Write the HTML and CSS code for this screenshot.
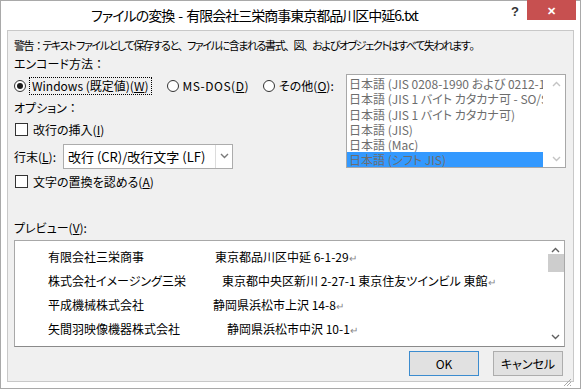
FILE: index.html
```html
<!DOCTYPE html>
<html>
	<head>
		<meta charset="UTF-8">
		<title>ファイルの変換</title>
		<link rel="stylesheet" href="styles.css">
	</head>
	<body>
		<div id="win">
			<div class="titlebar">
				<span class="title">ファイルの変換 - 有限会社三栄商事東京都品川区中延6.txt</span>
				<span class="help">?</span>
				<span class="close">&#x2715;</span>
			</div>
			<div class="client">
				<div class="warn">警告<span class="fw">：</span>テキスト ファイルとして保存すると<span class="fw">、</span>ファイルに含まれる書式<span class="fw">、</span>図<span class="fw">、</span>およびオブジェクトはすべて失われます<span class="fw">。</span></div>
				<div class="top">
					<div class="left">
						<div class="lbl">エンコード方法<span class="fw">：</span></div>
						<div class="radios">
							<label class="radio focus"><i class="dot on"></i><span class="fr">Windows (既定値)(<u>W</u>)</span></label>
							<label class="radio"><i class="dot"></i>MS-DOS(<u>D</u>)</label>
							<label class="radio"><i class="dot"></i>その他(<u>O</u>):</label>
						</div>
						<div class="lbl opt">オプション<span class="fw">：</span></div>
						<label class="check"><i class="box"></i>改行の挿入(<u>I</u>)</label>
						<div class="eol">
							<span>行末(<u>L</u>):</span>
							<div class="combo">
								<span class="val">改行 (CR)/改行文字 (LF)</span>
								<span class="drop"><svg width="9" height="6" viewBox="0 0 9 6"><path d="M1 1l3.5 3.5L8 1" fill="none" stroke="#7a7a7a" stroke-width="1.4"/></svg></span>
							</div>
						</div>
						<label class="check"><i class="box"></i>文字の置換を認める(<u>A</u>)</label>
					</div>
					<div class="list">
						<ul>
							<li>日本語 (JIS 0208-1990 および 0212-1990)</li>
							<li>日本語 (JIS 1 バイト カタカナ可 - SO/SI)</li>
							<li>日本語 (JIS 1 バイト カタカナ可)</li>
							<li>日本語 (JIS)</li>
							<li>日本語 (Mac)</li>
							<li class="sel">日本語 (シフト JIS)</li>
						</ul>
						<div class="lsb">
							<svg width="9" height="6" viewBox="0 0 9 6"><path d="M1 5l3.5-3.5L8 5" fill="none" stroke="#c4c4c4" stroke-width="1.4"/></svg>
							<svg width="9" height="6" viewBox="0 0 9 6"><path d="M1 1l3.5 3.5L8 1" fill="none" stroke="#c4c4c4" stroke-width="1.4"/></svg>
						</div>
					</div>
				</div>
				<div class="lbl pv">プレビュー(<u>V</u>):</div>
				<div class="preview">
					<div class="rows">
						<div class="row"><span>有限会社三栄商事</span><span class="ad">東京都品川区中延 6-1-29<em>&#x21B5;</em></span></div>
						<div class="row"><span>株式会社イメージング三栄</span><span class="ad r2">東京都中央区新川 2-27-1 東京住友ツインビル 東館<em>&#x21B5;</em></span></div>
						<div class="row"><span>平成機械株式会社</span><span class="ad r3">静岡県浜松市上沢 14-8<em>&#x21B5;</em></span></div>
						<div class="row"><span>矢間羽映像機器株式会社</span><span class="ad r4">静岡県浜松市中沢 10-1<em>&#x21B5;</em></span></div>
						<div class="row"><span>　　株式会社朝日電機</span><span class="ad">神奈川県横浜市港北区新横浜 2-5<em>&#x21B5;</em></span></div>
					</div>
					<div class="vsb">
						<svg width="9" height="6" viewBox="0 0 9 6"><path d="M1 5l3.5-3.5L8 5" fill="none" stroke="#606060" stroke-width="1.4"/></svg>
						<div class="thumb"></div>
						<div class="gap"></div>
						<svg width="9" height="6" viewBox="0 0 9 6"><path d="M1 1l3.5 3.5L8 1" fill="none" stroke="#606060" stroke-width="1.4"/></svg>
					</div>
				</div>
				<div class="btns">
					<button class="btn def">OK</button>
					<button class="btn">キャンセル</button>
					<svg class="grip" width="9" height="9" viewBox="0 0 9 9"><path d="M8 1L1 8M8 4L4 8M8 7L7 8" stroke="#a8a8a8" stroke-width="1"/></svg>
				</div>
			</div>
		</div>
	</body>
</html>
```
FILE: styles.css
```css
* {margin: 0; padding: 0; box-sizing: border-box;}
ul, li {list-style: none;}
body {
	background: #fff;
	font-family: "Noto Sans CJK JP", "Liberation Sans", sans-serif;
	font-size: 12px;
	color: #000;
	font-feature-settings: "palt";
}
u {text-underline-offset: 1px;}
.fw {font-feature-settings: normal;}

#win {
	width: 581px;
	height: 389px;
	border: 1px solid #a9a9a9;
	background: #fff;
	padding: 0 6px 6px 6px;
	display: flex;
	flex-direction: column;
}
.titlebar {
	height: 29px;
	position: relative;
	display: flex;
	justify-content: center;
	align-items: center;
}
.title {
	font-size: 14px;
	letter-spacing: -1px;
	word-spacing: 2px;
	color: #000;
	margin-left: -72px;
	margin-top: -2px;
}
.help {
	position: absolute;
	left: 504px; top: 3px;
	font-family: "Liberation Sans", sans-serif;
	font-weight: bold;
	font-size: 13px;
	color: #333;
}
.close {
	position: absolute;
	left: 520px; top: -1px;
	width: 49px; height: 20px;
	background: #c75050;
	color: #fff;
	font-size: 11px;
	font-weight: bold;
	display: flex;
	align-items: center;
	justify-content: center;
}

.client {
	flex: 1;
	background: #f0f0f0;
	border: 1px solid #c8c8c8;
	padding: 5px 7px 0 6px;
	display: flex;
	flex-direction: column;
}
.warn {
	height: 18px;
	line-height: 18px;
	white-space: nowrap;
	font-size: 11px;
	letter-spacing: -1.4px;
}
.warn .fw {letter-spacing: -1.8px;}
.top {display: flex;}
.left {flex: 1; min-width: 0; display: flex; flex-direction: column; white-space: nowrap;}
.lbl {height: 19px; line-height: 19px;}
.lbl .fw {letter-spacing: -1px;}
.radios {display: flex; align-items: center; height: 25px;}
.radio {display: flex; align-items: center; margin-right: 14px; flex-shrink: 0;}
.radio .dot {
	width: 12px; height: 12px;
	border: 1px solid #333;
	border-radius: 50%;
	background: #fff;
	margin-right: 4px;
	display: inline-block;
	position: relative;
}
.radio .dot.on::after {
	content: "";
	position: absolute;
	left: 2px; top: 2px;
	width: 6px; height: 6px;
	border-radius: 50%;
	background: #1a1a1a;
}
.radio .fr {
	outline: 1px dotted #000;
	padding: 0 2px;
	line-height: 16px;
}
.radio:nth-child(2) {margin-left: 2px; letter-spacing: 0.5px;}
.check {display: flex; align-items: center; height: 24px;}
.check .box {
	width: 13px; height: 13px;
	border: 1px solid #333;
	background: #fff;
	margin: 0 5px 0 1px;
	display: inline-block;
}
.check:last-child {margin-top: -2px;}
.eol {display: flex; align-items: center; height: 30px;}
.combo {
	margin-left: 7px;
	width: 170px;
	height: 25px;
	border: 1px solid #acacac;
	background: #fff;
	display: flex;
	align-items: center;
}
.combo .val {flex: 1; padding-left: 4px; font-size: 13px;}
.combo .drop {
	width: 17px; height: 23px;
	border-left: 1px solid #dcdcdc;
	display: flex; align-items: center; justify-content: center;
}

.list {
	flex-shrink: 0;
	margin-top: 20px;
	width: 220px;
	height: 94px;
	border: 1px solid #a8a8a8;
	background: #fff;
	display: flex;
	overflow: hidden;
	color: #6d6d6d;
}
.list ul {flex: 1; overflow: hidden; padding-top: 1px;}
.list li {height: 15.3px; line-height: 15px; white-space: nowrap; padding-left: 2px;}
.list li.sel {background: #3399ff; color: #6d6d6d;}
.lsb {
	width: 22px;
	display: flex;
	flex-direction: column;
	justify-content: space-between;
	align-items: center;
	padding: 6px 0 5px 4px;
}

.lbl.pv {margin-top: 26px; height: 17px; line-height: 17px;}
.preview {
	margin-top: 4px;
	width: 551px;
	height: 107px;
	border: 1px solid #a8a8a8;
	border-bottom-color: #8a8a8a;
	background: #fff;
	display: flex;
	overflow: hidden;
}
.rows {flex: 1; padding: 4px 0 0 33px; overflow: hidden;}
.row {display: flex; height: 24px; line-height: 24px; white-space: nowrap;}
.row span:first-child {width: 167px;}
.row em {font-style: normal; color: #888; font-size: 10px;}
.ad.r2 {margin-left: 7px;}
.ad.r3 {margin-left: -2px;}
.ad.r4 {margin-left: 12px;}
.vsb {
	width: 17px;
	display: flex;
	flex-direction: column;
	align-items: center;
	padding-top: 6px;
}
.vsb .thumb {width: 16px; height: 18px; background: #cdcdcd; margin-top: 1px;}
.vsb .gap {flex: 1;}
.vsb svg:last-child {margin-bottom: 6px;}

.btns {
	display: flex;
	justify-content: flex-end;
	gap: 14px;
	margin-top: 4px;
	padding-right: 3px;
	position: relative;
}
.btn {
	width: 70px;
	height: 25px;
	border: 1px solid #adadad;
	background: #e1e1e1;
	font-family: inherit;
	font-size: 12px;
	font-feature-settings: "palt";
	color: #000;
}
.btn.def {border-color: #3c8ccf;}
.grip {position: absolute; right: -6px; top: 27px;}
```
